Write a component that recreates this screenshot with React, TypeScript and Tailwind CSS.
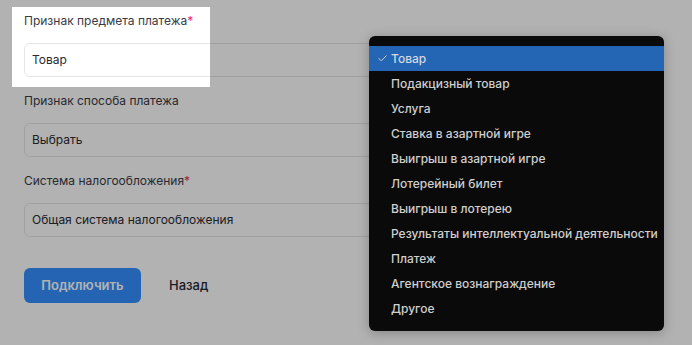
import React from 'react';

const options = [
  'Товар',
  'Подакцизный товар',
  'Услуга',
  'Ставка в азартной игре',
  'Выигрыш в азартной игре',
  'Лотерейный билет',
  'Выигрыш в лотерею',
  'Результаты интеллектуальной деятельности',
  'Платеж',
  'Агентское вознаграждение',
  'Другое',
];

const Field: React.FC<{ label: string; value: string; required?: boolean }> = ({ label, value, required }) => (
  <div className="flex flex-col">
    <label className="h-5 text-[12px] leading-5 text-[#3a3a44]">
      {label}
      {required && <span className="text-[#e0306a]">*</span>}
    </label>
    <div className="mt-3 flex h-[34px] items-center rounded-md border border-[#e6e6e9] bg-white px-[7px] text-[12px] text-[#2a2a33]">
      {value}
    </div>
  </div>
);

const Check = () => (
  <svg width="9" height="7" viewBox="0 0 9 7" fill="none" className="shrink-0">
    <path d="M0.8 3.4 L3.3 5.9 L8.2 0.8" stroke="#c9ccd4" strokeWidth="1" strokeLinecap="round" strokeLinejoin="round" />
  </svg>
);

const App: React.FC = () => {
  return (
    <div className="relative h-[345px] w-[692px] overflow-hidden bg-white" style={{ fontFamily: 'Inter, "Noto Sans", sans-serif' }}>
      {/* form */}
      <div className="flex flex-col pl-6 pr-12 pt-[11px]">
        <div className="flex flex-col gap-[14px]">
          <Field label="Признак предмета платежа" value="Товар" required />
          <Field label="Признак способа платежа" value="Выбрать" />
          <Field label="Система налогообложения" value="Общая система налогообложения" required />
        </div>
        <div className="mt-[31px] flex items-center gap-7">
          <button className="h-[35px] w-[117px] rounded-md bg-[#3490ff] text-[13px] font-semibold text-white">
            Подключить
          </button>
          <button className="text-[13px] font-medium text-[#2a2a3a]">Назад</button>
        </div>
      </div>

      {/* dim overlay */}
      <div className="absolute inset-0 bg-black/30" />

      {/* highlighted field */}
      <div className="absolute left-3 top-[7px] h-[80px] w-[198px] overflow-hidden bg-white">
        <div className="w-[620px] px-3 pt-1">
          <Field label="Признак предмета платежа" value="Товар" required />
        </div>
      </div>

      {/* dropdown */}
      <div className="absolute left-[369px] top-9 w-[295px] rounded-md bg-[#0a0a0a] py-[10px] shadow-[0_2px_12px_rgba(0,0,0,0.25)]">
        {options.map((opt, i) => (
          <div
            key={opt}
            className={`flex h-[25px] items-center text-[12px] font-medium ${i === 0 ? 'bg-[#2466b4] text-[#d4d8e0]' : 'text-[#cfcfcf]'}`}
          >
            <div className="flex w-[22px] shrink-0 justify-end pr-[4px]">{i === 0 && <Check />}</div>
            <span className="whitespace-nowrap">{opt}</span>
          </div>
        ))}
      </div>
    </div>
  );
};

export default App;
